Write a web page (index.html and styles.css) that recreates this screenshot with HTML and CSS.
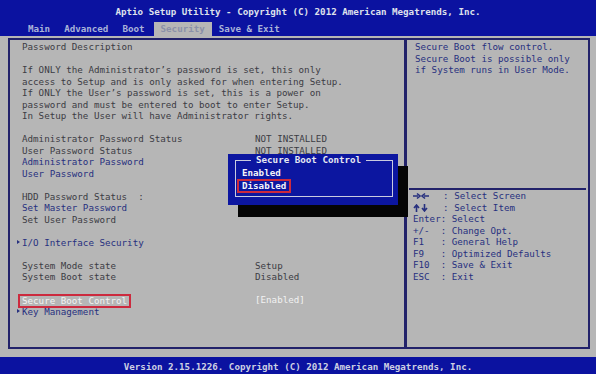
FILE: index.html
```html
<!DOCTYPE html>
<html lang="en">
<head>
  <meta charset="UTF-8">
  <title>Aptio Setup Utility</title>
  <link rel="stylesheet" href="styles.css">
</head>
<body>
  <div class="top">
    <div class="title">Aptio Setup Utility - Copyright (C) 2012 American Megatrends, Inc.</div>
    <div class="tabs">
      <span class="tab">Main</span>
      <span class="tab">Advanced</span>
      <span class="tab">Boot</span>
      <span class="tab active">Security</span>
      <span class="tab">Save &amp; Exit</span>
    </div>
  </div>

  <div class="screen">
    <div class="panel">
      <div class="row">Password Description</div>
      <div class="row"></div>
      <div class="row">If ONLY the Administrator’s password is set, this only</div>
      <div class="row">access to Setup and is only asked for when entering Setup.</div>
      <div class="row">If ONLY the User’s password is set, this is a power on</div>
      <div class="row">password and must be entered to boot to enter Setup.</div>
      <div class="row">In Setup the User will have Administrator rights.</div>
      <div class="row"></div>
      <div class="row"><span class="label">Administrator Password Status</span><span>NOT INSTALLED</span></div>
      <div class="row"><span class="label">User Password Status</span><span>NOT INSTALLED</span></div>
      <div class="row item">Administrator Password</div>
      <div class="row item">User Password</div>
      <div class="row"></div>
      <div class="row">HDD Password Status&nbsp;&nbsp;:</div>
      <div class="row item">Set Master Password</div>
      <div class="row">Set User Password</div>
      <div class="row"></div>
      <div class="row item"><span class="arrow"></span>I/O Interface Security</div>
      <div class="row"></div>
      <div class="row"><span class="label">System Mode state</span><span>Setup</span></div>
      <div class="row"><span class="label">System Boot state</span><span>Disabled</span></div>
      <div class="row"></div>
      <div class="row selected"><span class="label"><span class="hl">Secure Boot Control</span></span><span>[Enabled]</span></div>
      <div class="row item"><span class="arrow"></span>Key Management</div>
    </div>

    <div class="help">
      <div class="help-text">
        <div class="row">Secure Boot flow control.</div>
        <div class="row">Secure Boot is possible only</div>
        <div class="row">if System runs in User Mode.</div>
      </div>
      <div class="keys">
        <div class="row"><svg class="keyicon" width="16" height="8" viewBox="0 0 16 8"><path d="M0 4h5M4 1.5l3 2.5-3 2.5M16 4h-5M12 1.5l-3 2.5 3 2.5" fill="none" stroke="#27307f" stroke-width="1.6"/></svg>  : Select Screen</div>
        <div class="row"><svg class="keyicon" width="16" height="8" viewBox="0 0 16 8"><path d="M3.5 8V2M1 4l2.5-3 2.5 3M11.5 0v6M9 4l2.5 3 2.5-3" fill="none" stroke="#27307f" stroke-width="1.6"/></svg>  : Select Item</div>
        <div class="row">Enter: Select</div>
        <div class="row">+/-  : Change Opt.</div>
        <div class="row">F1   : General Help</div>
        <div class="row">F9   : Optimized Defaults</div>
        <div class="row">F10  : Save &amp; Exit</div>
        <div class="row">ESC  : Exit</div>
      </div>
    </div>
  </div>

  <div class="bottom">Version 2.15.1226. Copyright (C) 2012 American Megatrends, Inc.</div>

  <div class="popup">
    <div class="popup-frame">
      <div class="popup-title">Secure Boot Control</div>
      <div class="option">Enabled</div>
      <div class="option"><span class="hl">Disabled</span></div>
    </div>
  </div>
</body>
</html>
```

FILE: styles.css
```css
* { margin: 0; padding: 0; box-sizing: border-box; }
body { font-family: "DejaVu Sans Mono", "Liberation Mono", monospace; font-size: 9.2px; background: #b6b6b6; color: #3c3c44; width: 596px; height: 374px; overflow: hidden; position: relative; }

.top { background: #0b12a0; height: 36px; }
.title { height: 22px; line-height: 24px; text-align: center; color: #dfe1ec; font-weight: bold; }
.tabs { display: flex; height: 14px; padding-left: 21px; }
.tab { padding: 0 7px; line-height: 14px; color: #a9b3d9; font-weight: bold; }
.tab.active { background: #b6b6b6; color: #8a90a8; margin-left: 2px; }

.screen { display: flex; margin: 2px 6px 0 8px; height: 311px; }
.panel { width: 398px; border: 2px solid #22226a; padding: 1px 0 0 12px; }
.help { flex: 1; border: 2px solid #22226a; border-left: 1px solid #22226a; color: #27307f; }
.help-text { height: 150px; padding: 1px 0 0 6px; border-bottom: 2px solid #22226a; margin: 0 2px; }
.keys { padding: 0 0 0 4px; margin: 0 2px; }
.keyicon { margin: 2px 3px 0 0; flex-shrink: 0; }

.row { height: 11.5px; line-height: 11.5px; white-space: pre; display: flex; }
.label { width: 233px; }
.item { color: #27307f; }
.arrow { display: inline-block; width: 0; height: 0; margin: 3px 2px 0 -5px; border-left: 3px solid #27307f; border-top: 2.5px solid transparent; border-bottom: 2.5px solid transparent; }
.selected { color: #f2f2f2; }
.hl { border: 2px solid #cc2a3e; padding: 0 2px; margin-left: -4px; line-height: 10px; display: inline-block; }

.bottom { margin-top: 8px; height: 17px; background: #0b12a0; color: #cdd0e3; text-align: center; line-height: 19px; font-weight: bold; }

.popup { position: absolute; left: 228px; top: 154px; width: 170px; height: 51px; background: #0c16a0; box-shadow: 10px 12px 0 #050505; padding: 6px 5px 8px 7px; }
.popup-frame { border: 1px solid #c9cbe0; height: 37px; position: relative; padding: 6px 0 0 6px; color: #f4f4f8; font-weight: bold; }
.popup-title { position: absolute; top: -7px; left: 15px; background: #0c16a0; padding: 0 5px; line-height: 12px; color: #e6e8f2; }
.option { height: 11.5px; line-height: 11.5px; }
.option .hl { margin-left: -5px; padding: 0 3px; }
```
